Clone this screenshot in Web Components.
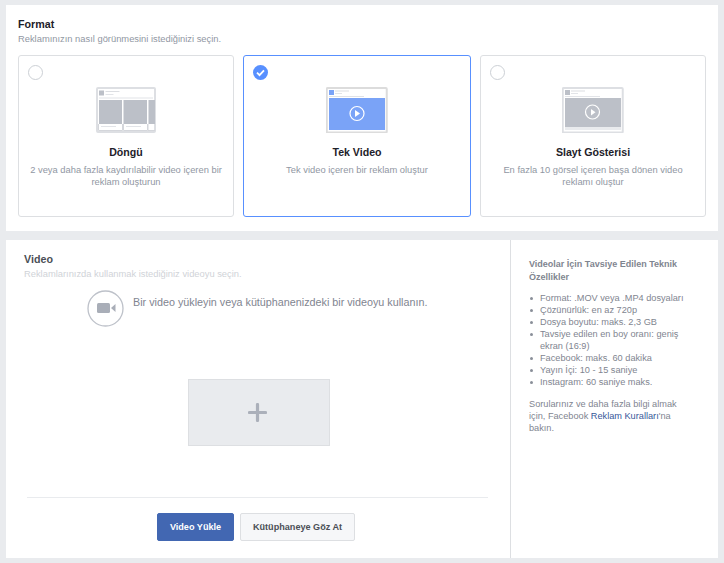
<!DOCTYPE html>
<html lang="tr"><head><meta charset="utf-8"><title>Format</title>
<style>
html,body{margin:0;padding:0;background:#e9ebee}
body{font-family:"Liberation Sans",Arial,sans-serif;width:724px;height:563px;overflow:hidden}
</style></head><body>
<ad-page>
  <format-panel>
    <format-card slot="cards" heading="Döngü" style="width:216px" kind="carousel">2 veya daha fazla kaydırılabilir video içeren bir reklam oluşturun</format-card>
    <format-card slot="cards" heading="Tek Video" style="width:228px" kind="video" selected>Tek video içeren bir reklam oluştur</format-card>
    <format-card slot="cards" heading="Slayt Gösterisi" style="width:226px" kind="slideshow">En fazla 10 görsel içeren başa dönen video reklamı oluştur</format-card>
  </format-panel>
  <video-panel>
    <spec-sidebar slot="side"></spec-sidebar>
  </video-panel>
</ad-page>
<script>
function def(name, html, init){
  customElements.define(name, class extends HTMLElement{
    constructor(){super();this.attachShadow({mode:'open'}).innerHTML=html;}
    connectedCallback(){if(init)init(this);}
  });
}
def('ad-page',`<style>:host{display:flex;flex-direction:column;gap:9px;padding:5px 6px 0;width:712px}</style><slot></slot>`);

def('format-panel',`<style>
:host{display:block;background:#fff;height:226px;box-sizing:border-box;padding:13px 12px 0}
h2{margin:0;font:bold 10.700px/13px "Liberation Sans",Arial,sans-serif;color:#1d2129}
p{margin:1px 0 0;font:9.350px/14px "Liberation Sans",Arial,sans-serif;color:#9197a3}
.cards{display:flex;gap:9px;margin-top:9px}
</style><h2>Format</h2><p>Reklamınızın nasıl görünmesini istediğinizi seçin.</p>
<div class="cards"><slot name="cards"></slot></div>`);

const thumbs={
carousel:`<svg width="60" height="46" viewBox="0 0 60 46"><rect x="1" y="1" width="58" height="44" rx="1" fill="#fff" stroke="#dddfe3" stroke-width="2"/>
<rect x="3" y="3.500" width="5" height="5" fill="#bcc0c8"/><rect x="9.500" y="4" width="14" height="1" fill="#dcdee2"/><rect x="9.500" y="7" width="8" height="1" fill="#e2e4e8"/><rect x="3" y="10.500" width="54" height="1" fill="#e2e4e8"/>
<rect x="3" y="13" width="23" height="24" fill="#bcc0c8"/><rect x="27.500" y="13" width="23.500" height="24" fill="#bcc0c8"/><rect x="52.500" y="13" width="6.500" height="24" fill="#bcc0c8"/>
<path d="M2.500 37v6.500h24V37M27.500 37v6.500h24V37M52 37v6.500h7" fill="none" stroke="#d4d6db"/><rect x="5" y="39" width="15" height="1" fill="#e2e4e8"/><rect x="30" y="39" width="15" height="1" fill="#e2e4e8"/></svg>`,
video:`<svg width="62" height="46" viewBox="0 0 62 46"><rect x=".75" y="1" width="60" height="44.500" rx="1" fill="#fff" stroke="#dcdcdc" stroke-width="2"/>
<rect x="3" y="3" width="5" height="5" fill="#7aa3f7"/><rect x="9" y="3.500" width="14" height="1" fill="#dcdee2"/><rect x="9" y="6" width="7" height="1" fill="#e2e4e8"/><rect x="3" y="9" width="35" height="1" fill="#e0e2e6"/>
<rect x="3" y="11" width="56" height="32" fill="#7aa3f7"/>
<circle cx="31" cy="26.500" r="7" fill="none" stroke="#fff" stroke-width="1.200"/><path d="M29 23v7l5-3.500z" fill="#fff"/></svg>`,
slideshow:`<svg width="62" height="46" viewBox="0 0 62 46"><rect x=".75" y="1" width="60" height="44.500" rx="1" fill="#fff" stroke="#dddfe3" stroke-width="2"/>
<rect x="3" y="3" width="5" height="5" fill="#bcc0c8"/><rect x="9" y="3.500" width="14" height="1" fill="#dcdee2"/><rect x="9" y="6" width="7" height="1" fill="#e2e4e8"/><rect x="3" y="9" width="35" height="1" fill="#e2e4e8"/>
<rect x="3" y="11" width="56" height="29" fill="#bcc0c8"/><rect x="3" y="40" width="56" height="3" fill="#e9ebee"/>
<circle cx="30.500" cy="25" r="7" fill="none" stroke="#fff" stroke-width="1.200"/><path d="M29 22v6.500l4.500-3.250z" fill="#fff"/></svg>`};

def('format-card',`<style>
:host{display:block;box-sizing:border-box;height:162px;background:#fff;border:1px solid #dddfe2;border-radius:3px;position:relative;text-align:center;padding:31px 10px 0;flex:none}
:host([selected]){border-color:#5890ff}
.radio{position:absolute;left:9px;top:9px;width:15px;height:15px;box-sizing:border-box;border:1px solid #ccd0d5;border-radius:50%;background:#fff}
:host([selected]) .radio{display:none}
.check{display:none;position:absolute;left:9px;top:9px;width:15px;height:15px}
:host([selected]) .check{display:block}
.thumb{height:46px;line-height:0}
h3{margin:11px 0 0;font:bold 10.600px/16px "Liberation Sans",Arial,sans-serif;color:#1d2129}
p{margin:4px 0 0;font:9.350px/12px "Liberation Sans",Arial,sans-serif;color:#9197a3}
</style><span class="radio"></span>
<svg class="check" viewBox="0 0 15 15"><circle cx="7.500" cy="7.500" r="7.500" fill="#5890ff"/><path d="M4 7.700l2.500 2.400L11 5.300" fill="none" stroke="#fff" stroke-width="1.800"/></svg>
<div class="thumb"></div><h3></h3><p><slot></slot></p>`,el=>{
  el.shadowRoot.querySelector('h3').textContent=el.getAttribute('heading');
  el.shadowRoot.querySelector('.thumb').innerHTML=thumbs[el.getAttribute('kind')];
});

def('action-button',`<style>
:host{display:block;box-sizing:border-box;height:28px;border-radius:2px;border:1px solid #dddfe2;background:#f6f7f9;color:#4b4f56;font:bold 9.100px/26px "Liberation Sans",Arial,sans-serif;text-align:center;cursor:pointer}
:host([primary]){background:#4267b2;border-color:#4267b2;color:#fff}
</style><slot></slot>`);

def('video-panel',`<style>
:host{display:grid;grid-template-columns:504px 1fr;background:#fff;height:318px}
.main{border-right:1px solid #dddfe2;padding:13px 20px 0 18px;display:flex;flex-direction:column;min-width:0;box-sizing:border-box;width:505px}
h2{margin:0;font:bold 10.700px/13px "Liberation Sans",Arial,sans-serif;color:#4b4f56}
.sub{margin:1px 0 0;font:9.350px/14px "Liberation Sans",Arial,sans-serif;color:#d0d3d8}
.prompt{display:flex;gap:9px;margin:9px 0 0 63px;color:#7f8590;font:10.770px/15px "Liberation Sans",Arial,sans-serif}
.prompt svg{flex:none}
.prompt span{margin-top:5px}
.drop{width:142px;height:67px;box-sizing:border-box;background:#e9ebee;border:1px solid #dddfe2;align-self:center;margin:52px 0 0;display:flex;align-items:center;justify-content:center;padding-right:3px;position:relative;left:2px}
.foot{margin:51px 0 0 3px;border-top:1px solid #e9ebee;width:461px;box-sizing:border-box;display:flex;justify-content:center;gap:6px;padding:15px 3px 0 0}
action-button:first-child{width:77px}action-button:last-child{width:115px}
</style><div class="main"><h2>Video</h2><p class="sub">Reklamlarınızda kullanmak istediğiniz videoyu seçin.</p>
<div class="prompt"><svg width="37" height="37" viewBox="0 0 37 37"><circle cx="18.500" cy="18.500" r="17.500" fill="#fff" stroke="#bdc1c9" stroke-width="1.300"/><rect x="10" y="13" width="13" height="10" rx="1.500" fill="#a9aeb8"/><path d="M24 18l4.500-4v8z" fill="#a9aeb8"/></svg><span>Bir video yükleyin veya kütüphanenizdeki bir videoyu kullanın.</span></div>
<div class="drop"><svg width="19" height="19" viewBox="0 0 19 19"><path d="M9.500 1.500v16M1.500 9.500h16" stroke="#abb0ba" stroke-width="3.200" stroke-linecap="round"/></svg></div>
<div class="foot"><action-button primary>Video Yükle</action-button><action-button>Kütüphaneye Göz At</action-button></div></div>
<slot name="side"></slot>`);

def('spec-sidebar',`<style>
:host{display:block;padding:18px 30px 0 19px;font:9.200px/12px "Liberation Sans",Arial,sans-serif;color:#7f8590}
h4{margin:0;font:bold 9px/12.500px "Liberation Sans",Arial,sans-serif;color:#7f8590}
ul{margin:9px 0 0;padding:0 0 0 11px;list-style:none}
li{position:relative;line-height:12px}
li::before{content:"";position:absolute;left:-10px;top:5px;width:3px;height:3px;border-radius:50%;background:#8a8f99}
p{margin:10px 0 0;line-height:12px}
a{color:#365899;text-decoration:none}
</style><h4>Videolar İçin Tavsiye Edilen Teknik Özellikler</h4>
<ul><li>Format: .MOV veya .MP4 dosyaları</li><li>Çözünürlük: en az 720p</li><li>Dosya boyutu: maks. 2,3 GB</li><li>Tavsiye edilen en boy oranı: geniş ekran (16:9)</li><li>Facebook: maks. 60 dakika</li><li>Yayın İçi: 10 - 15 saniye</li><li>Instagram: 60 saniye maks.</li></ul>
<p>Sorularınız ve daha fazla bilgi almak için, Facebook <a href="#">Reklam Kuralları</a>'na bakın.</p>`);
</script>
</body></html>
